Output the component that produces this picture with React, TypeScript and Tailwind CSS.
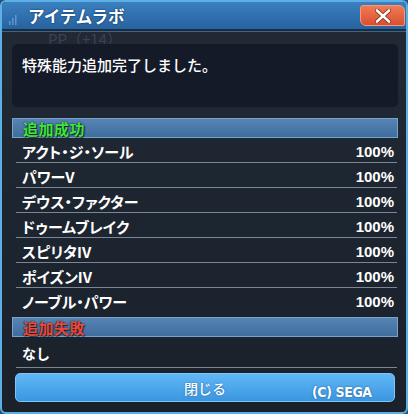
import React from "react";

const JP = "[font-family:'Noto_Sans_CJK_JP','Noto_Sans',sans-serif]";

const SUCCESS = [
  "アクト・ジ・ソール",
  "パワーV",
  "デウス・ファクター",
  "ドゥームブレイク",
  "スピリタIV",
  "ポイズンIV",
  "ノーブル・パワー",
];

function SignalIcon() {
  return (
    <svg width="8" height="10" viewBox="0 0 8 10" className="opacity-60">
      <rect x="0" y="6" width="1.5" height="4" fill="#7fb4e4" />
      <rect x="3" y="3" width="1.5" height="7" fill="#7fb4e4" />
      <rect x="6" y="0" width="1.5" height="10" fill="#7fb4e4" />
    </svg>
  );
}

function CloseIcon() {
  return (
    <svg width="16" height="14" viewBox="0 0 16 14">
      <path d="M2 1.5 L14 12.5 M14 1.5 L2 12.5" stroke="#7a2a16" strokeWidth="4.2" strokeLinecap="round" />
      <path d="M2 1.5 L14 12.5 M14 1.5 L2 12.5" stroke="#ffffff" strokeWidth="2.6" strokeLinecap="round" />
    </svg>
  );
}

function SectionHeader({ label, color }: { label: string; color: string }) {
  return (
    <div className="h-[20px] flex items-center pl-[10px] border border-[#7aa3cc] bg-gradient-to-b from-[#5684b4] to-[#3f6d9e]">
      <span
        className={`text-[15px] font-bold leading-none tracking-[0.5px] ${color} [text-shadow:0_0_2px_rgba(0,0,0,0.8),1px_1px_1px_rgba(0,0,0,0.6)]`}
      >
        {label}
      </span>
    </div>
  );
}

export default function App() {
  return (
    <div className={`w-[408px] h-[414px] bg-[#23527a] ${JP}`}>
      <div className="h-full flex flex-col rounded-[6px] border-2 border-[#5cb0e6] overflow-hidden bg-gradient-to-b from-[#222a35] via-[#1d2530] to-[#1a212b]">
        {/* title bar */}
        <div className="h-[29px] flex items-start bg-gradient-to-b from-[#3b80bf] to-[#2762a0] border-b-2 border-[#1b2c3e]">
          <div className="mt-[13px] ml-[7px]">
            <SignalIcon />
          </div>
          <span className="ml-[11px] mt-[4px] text-[16.5px] font-bold leading-[20px] text-white [text-shadow:0_0_2px_rgba(10,30,60,0.9)]">
            アイテムラボ
          </span>
          <button className="ml-auto mr-[1px] mt-[3px] w-[45px] h-[21px] flex items-center justify-center rounded-tr-[6px] rounded-tl-[3px] rounded-bl-[6px] rounded-br-[2px] bg-gradient-to-b from-[#f07a55] to-[#d94f2f] border border-[#f59a78]">
            <CloseIcon />
          </button>
        </div>

        {/* body */}
        <div className="relative flex-1 flex flex-col pl-[10px] pr-[8px] pt-[12px] border-t border-[#3f6386]">
          <span className="absolute left-[46px] top-[0px] text-[15px] leading-[14px] text-[#3a4350] pointer-events-none">
            PP（+14）
          </span>

          <div className="relative h-[63px] rounded-[5px] bg-[#141a28] px-[10px] pt-[11px]">
            <p className="text-[15px] leading-[20px] font-medium text-white">
              特殊能力追加完了しました。
            </p>
          </div>

          <div className="mt-[11px]">
            <SectionHeader label="追加成功" color="text-[#3fe53a]" />
          </div>

          <div className="ml-[4px] mr-[1px]">
            {SUCCESS.map((name, i) => (
              <div
                key={name}
                className={`h-[25px] flex items-center justify-between pl-[6px] pr-[3px] pt-[2px] ${
                  i < SUCCESS.length - 1 ? "border-b border-[#7c8693]" : ""
                }`}
              >
                <span className="text-[15px] font-bold text-white leading-none [font-feature-settings:'palt']">
                  {name}
                </span>
                <span className="text-[15px] font-bold text-white leading-none [font-family:'Liberation_Sans',sans-serif]">
                  100%
                </span>
              </div>
            ))}
          </div>

          <div className="mt-[4px]">
            <SectionHeader label="追加失敗" color="text-[#e9483a]" />
          </div>

          <div className="ml-[4px] mr-[1px] h-[31px] flex items-center pl-[6px] pt-[1px] border-b border-[#7c8693]">
            <span className="text-[14px] font-bold text-white leading-none">なし</span>
          </div>

          <div className="relative mt-[5px] ml-[3px] mr-[3px]">
            <button className="w-full h-[29px] rounded-[5px] bg-gradient-to-b from-[#60b8f6] to-[#3b96e0] border border-[#7cc6f8] flex items-center justify-center">
              <span className="text-[14px] font-medium text-white leading-none [text-shadow:0_0_2px_rgba(20,60,110,0.6)]">
                閉じる
              </span>
            </button>
            <span className="absolute left-[297px] top-[12px] text-[14px] font-bold text-white leading-none tracking-[-0.4px] [font-family:'DejaVu_Sans_Condensed','Liberation_Sans',sans-serif] [text-shadow:0_0_2px_rgba(20,60,110,0.7)] pointer-events-none">
              (C) SEGA
            </span>
          </div>
        </div>
      </div>
    </div>
  );
}
